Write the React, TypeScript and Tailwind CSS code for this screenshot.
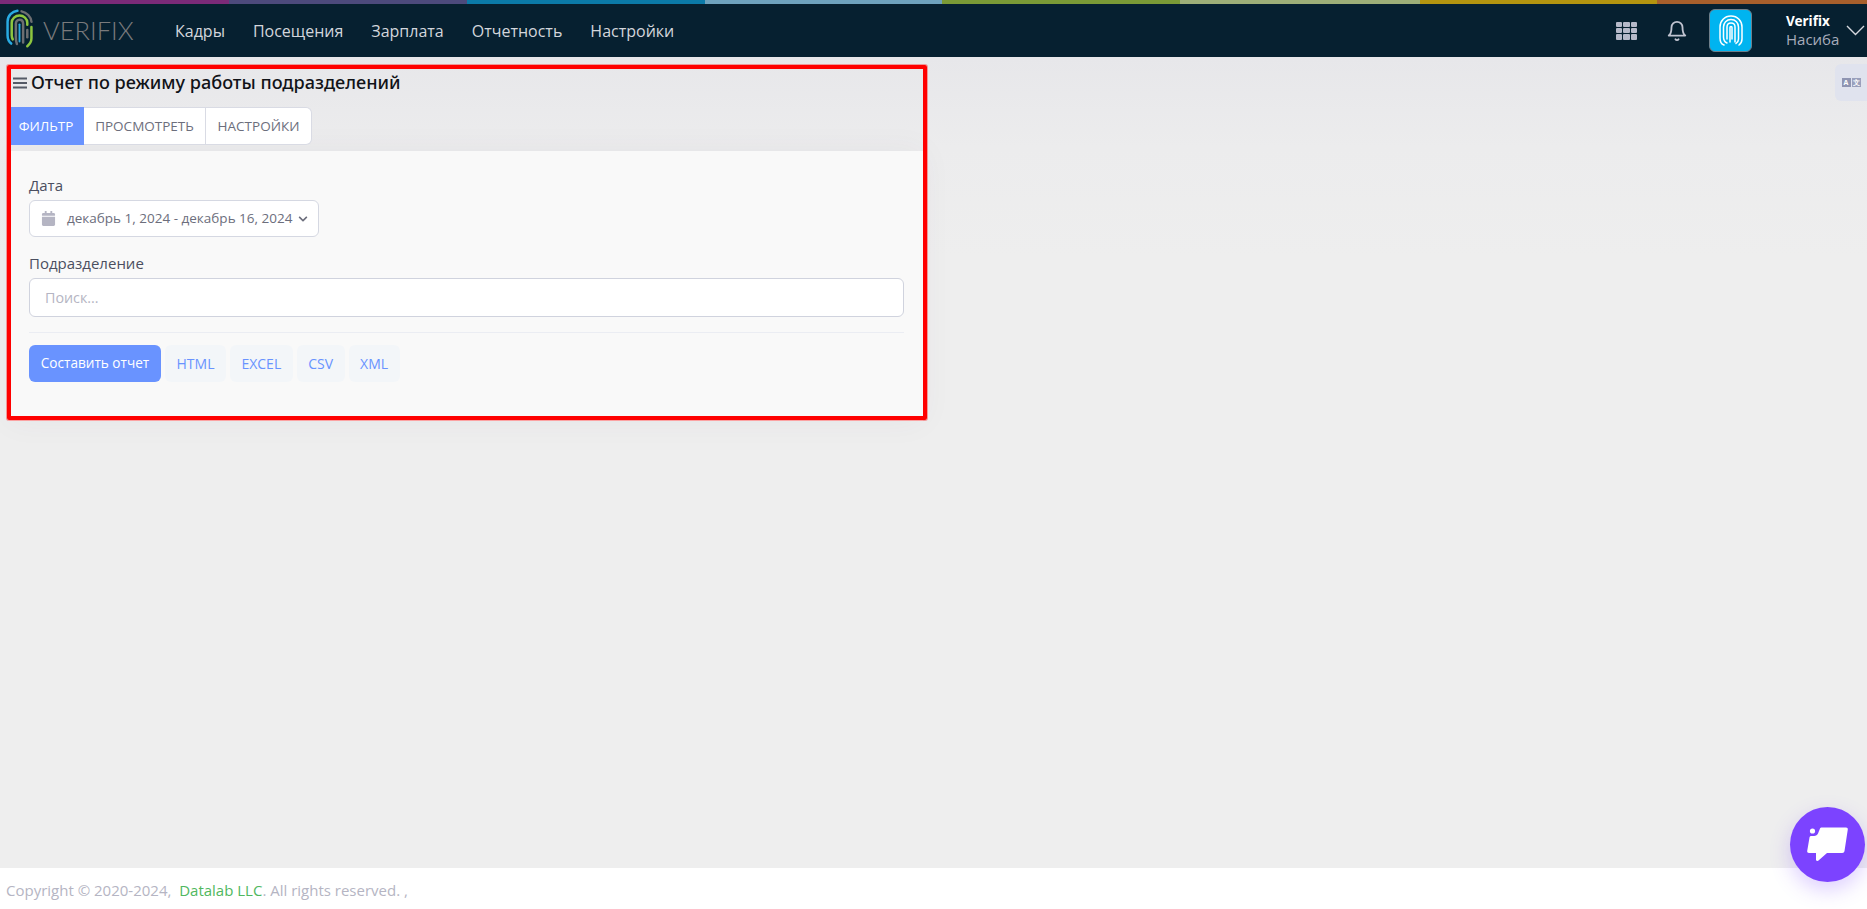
import { FaCalendar, FaChevronDown } from "react-icons/fa";
import { LuBell } from "react-icons/lu";

const font = "font-['Open_Sans','Noto_Sans',sans-serif]";

const stripes = [
  { color: "#7b2a78", width: 229 },
  { color: "#4c4a7c", width: 238 },
  { color: "#0b7aa8", width: 238 },
  { color: "#6ea2bd", width: 237 },
  { color: "#7a9a36", width: 238 },
  { color: "#9dae78", width: 240 },
  { color: "#b3940f", width: 237 },
  { color: "#a75f2c", width: 210 },
];

const menu = ["Кадры", "Посещения", "Зарплата", "Отчетность", "Настройки"];
const exportsList = ["HTML", "EXCEL", "CSV", "XML"];

function LogoMark() {
  return (
    <svg className="mb-[4px]" width="27" height="39" viewBox="0 0 26 37" fill="none" strokeLinecap="round" strokeWidth="2.400">
      <path d="M5 33 C2.500 31 1.500 28.500 1.500 25 V12 C1.500 6 6 2 11 1.500" stroke="#29abe2" />
      <path d="M15 2 C20 3 24 7 24.500 12" stroke="#6d6e71" />
      <path d="M24.500 17 V28 C24.500 31 23 33.500 20.500 35.500" stroke="#8dc63f" />
      <path d="M6.500 29 C5.500 27 5.500 26 5.500 25 V13 C5.500 9 9 6 13 6 C17 6 20.500 9 20.500 13 V15" stroke="#8dc63f" />
      <path d="M10.500 33.500 C9.500 31 9.500 29 9.500 27 V14 C9.500 11.500 11 10 13 10 C15 10 16.500 11.500 16.500 14 V32" stroke="#6d6e71" />
      <path d="M20.500 20 V27" stroke="#6d6e71" />
      <path d="M13 31 V14.500" stroke="#29abe2" strokeWidth="1.800" />
    </svg>
  );
}

function AvatarPrint() {
  return (
    <svg width="24" height="32" viewBox="0 0 24 32" fill="none" stroke="#fff" strokeWidth="1.500" strokeLinecap="round">
      <path d="M5 30 C2 29 1 26 1 23 V12 C1 6 5.500 1 12 1 C18.500 1 23 6 23 12 V24 C23 27 22 28.500 20 30" />
      <path d="M8 28 C5.500 27 4.500 25 4.500 22 V12 C4.500 8 7.500 4.500 12 4.500 C16.500 4.500 19.500 8 19.500 12 V24 C19.500 26 18.500 27.500 17 28.500" />
      <path d="M8 24 V12 C8 9.500 9.500 8 12 8 C14.500 8 16 9.500 16 12 V27" />
      <path d="M11 27 V12.500 C11 11 13 11 13 12.500 V24" />
    </svg>
  );
}

function ChatIcon() {
  return (
    <svg width="42" height="36" viewBox="0 0 42 36" fill="#fff">
      <circle cx="5.500" cy="4" r="2.600" />
      <path d="M13 1.500 C13.300 0.800 14 0.500 14.800 0.500 H39 C40.300 0.500 41 1.300 40.800 2.500 L37.500 24 C37.300 25.300 36.500 26 35.200 26 H20 L11.500 33.500 C10.500 34.300 9 33.800 9 32.400 V26 H2 C0.800 26 0 25.200 0.200 24 L2.500 10.500 C2.700 9.500 3.300 9 4.200 9 H7 C9 9 10.300 8 11 6.500 Z" />
    </svg>
  );
}

function AppsGrid() {
  return (
    <div className="grid grid-cols-3 gap-[1px] w-[21px] h-[18px]">
      {Array.from({ length: 9 }).map((_, i) => (
        <span key={i} className="bg-[#b5b9c9] rounded-[1px]" />
      ))}
    </div>
  );
}

export default function App() {
  return (
    <div className={`${font} relative flex flex-col h-[909px] overflow-hidden bg-[#eeeeee] text-[#3f4254]`}>
      {/* Header */}
      <header className="h-[57px] shrink-0 bg-[#062030] flex flex-col">
        <div className="flex h-[4px] shrink-0">
          {stripes.map((s) => (
            <div key={s.color} className="h-full" style={{ width: s.width, backgroundColor: s.color }} />
          ))}
        </div>
        <div className="flex-1 flex items-center pl-[6px] pr-[2px]">
          <LogoMark />
          <span className="ml-[10px] w-[132px] text-[25.500px] font-light text-[#7a7a7c] font-['Lato',sans-serif]">VERIFIX</span>
          <nav className="flex gap-[28px] text-[16px] text-[#d3d6dc]">
            {menu.map((m) => (
              <span key={m}>{m}</span>
            ))}
          </nav>
          <div className="ml-auto flex items-center">
            <AppsGrid />
            <LuBell className="ml-[29px] text-[#c0c3d0]" size={22} strokeWidth={2} />
            <div className="ml-[21px] w-[43px] h-[43px] rounded-[6px] bg-[#00b4f0] border border-[#6f7f8a] flex items-center justify-center">
              <AvatarPrint />
            </div>
            <div className="ml-[34px] flex flex-col w-[60px] mb-[3px]">
              <span className="text-[13.500px] leading-[20px] font-bold text-white font-['Noto_Sans',sans-serif]">Verifix</span>
              <span className="text-[15px] leading-[17px] text-[#a8acbb]">Насиба</span>
            </div>
            <svg width="19" height="11" viewBox="0 0 19 11" fill="none" stroke="#d5d8de" strokeWidth="1.400">
              <path d="M1 1 L9.500 9.500 L18 1" />
            </svg>
          </div>
        </div>
      </header>

      {/* Content */}
      <main className="flex-1 relative bg-[linear-gradient(180deg,#e7e7ea_0,#ececed_90px,#eeeeee_200px)]">
        <div className="w-[915px] ml-[8px] pt-[14px]">
          <div className="flex items-center h-[24px] pl-[5px] gap-[4px]">
            <svg width="14" height="12" viewBox="0 0 14 12" fill="#555a66">
              <rect x="0" y="0.500" width="14" height="2" />
              <rect x="0" y="5" width="14" height="2" />
              <rect x="0" y="9.500" width="14" height="2" />
            </svg>
            <h1 className="text-[18.100px] font-medium text-[#111318] font-['Noto_Sans',sans-serif]">Отчет по режиму работы подразделений</h1>
          </div>
          <div className="flex mt-[12px] h-[38px] ml-[2px] text-[13.500px]">
            <div className="w-[74px] pr-[2px] bg-[#6993ff] text-white flex items-center justify-center">ФИЛЬТР</div>
            <div className="w-[122px] bg-white text-[#6c6e7c] border-y border-r border-[#d9dbe4] flex items-center justify-center">ПРОСМОТРЕТЬ</div>
            <div className="w-[106px] bg-white text-[#6c6e7c] border-y border-r border-[#d9dbe4] rounded-r-[6px] flex items-center justify-center">НАСТРОЙКИ</div>
          </div>
          <section className="mt-[6px] h-[270px] bg-[#f9f9f9] pl-[21px] pr-[19px] pt-[24px] shadow-[0_0_30px_rgba(82,63,105,0.05)]">
            <label className="block text-[15px] leading-[20px] text-[#4b4f60]">Дата</label>
            <div className="mt-[5px] w-[290px] h-[37px] bg-white border border-[#d5d8e2] rounded-[6px] flex items-center pl-[11px] text-[#6c6e7c]">
              <FaCalendar className="text-[#b5b5c3]" size={15} />
              <span className="ml-[11px] text-[13.500px] whitespace-nowrap">декабрь 1, 2024 - декабрь 16, 2024</span>
              <FaChevronDown className="ml-[6px] text-[#6c6e7c]" size={10} />
            </div>
            <label className="block mt-[16px] text-[15px] leading-[20px] text-[#4b4f60]">Подразделение</label>
            <div className="mt-[5px] h-[39px] bg-white border border-[#d0d3de] rounded-[6px] flex items-center pl-[15px] text-[14.300px] text-[#b5b5c3]">Поиск...</div>
            <div className="mt-[15px] border-t border-[#ebedf3]" />
            <div className="mt-[12px] flex gap-[4px] text-[14px]">
              <button className="w-[132px] h-[37px] bg-[#6993ff] text-white rounded-[6px] text-[13.600px]">Составить отчет</button>
              {exportsList.map((e) => (
                <button key={e} className="h-[37px] px-[11.500px] bg-[#f3f6f9] text-[#6993ff] rounded-[6px]">{e}</button>
              ))}
            </div>
          </section>
        </div>

        {/* Red highlight drawn over the page */}
        <div className="absolute left-[7px] top-[8px] w-[920px] h-[355px] border-[4px] border-[#ff0000] rounded-[2px] shadow-[0_0_0_1px_rgba(255,0,0,0.35)] pointer-events-none" />

        {/* Language tab */}
        <div className="absolute right-0 top-[7px] w-[32px] h-[37px] bg-[#e0e3ee] rounded-l-[6px] flex items-center justify-center gap-[1px]">
          <span className="w-[9px] h-[9px] bg-[#8f95b2] text-white text-[7px] leading-[9px] text-center font-bold">A</span>
          <span className="w-[9px] h-[9px] bg-[#9aa0bc] text-white text-[7px] leading-[9px] text-center font-bold">文</span>
        </div>
      </main>

      {/* Footer */}
      <footer className="h-[41px] shrink-0 bg-white flex items-center pl-[6px] pt-[3px] text-[15px] text-[#b5b5c3]">
        <span>Copyright © 2020-2024,&nbsp;&nbsp;</span>
        <span className="text-[#50b860]">Datalab LLC</span>
        <span>. All rights reserved. ,</span>
      </footer>

      {/* Chat button */}
      <div className="absolute left-[1790px] top-[807px] w-[75px] h-[75px] rounded-full bg-[#7c43ff] flex items-center justify-center shadow-[0_8px_20px_rgba(124,67,255,0.25)]">
        <ChatIcon />
      </div>
    </div>
  );
}
